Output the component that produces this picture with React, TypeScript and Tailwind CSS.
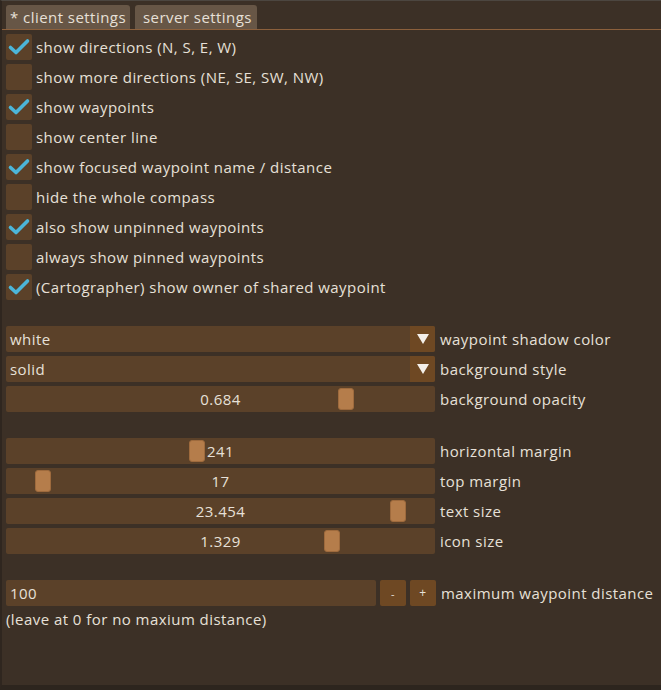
import type React from "react";

const checks: { label: string; on: boolean }[] = [
  { label: "show directions (N, S, E, W)", on: true },
  { label: "show more directions (NE, SE, SW, NW)", on: false },
  { label: "show waypoints", on: true },
  { label: "show center line", on: false },
  { label: "show focused waypoint name / distance", on: true },
  { label: "hide the whole compass", on: false },
  { label: "also show unpinned waypoints", on: true },
  { label: "always show pinned waypoints", on: false },
  { label: "(Cartographer) show owner of shared waypoint", on: true },
];

const font = "font-['Open_Sans',sans-serif] tracking-[0.45px]";

const CheckMark = () => (
  <svg width="26" height="26" viewBox="0 0 26 26">
    <path
      d="M4.5 13.5 L10 18.5 L21.5 7"
      fill="none"
      stroke="#4cb6d9"
      strokeWidth="3.6"
      strokeLinecap="round"
      strokeLinejoin="round"
    />
  </svg>
);

const Dropdown: React.FC<{ value: string; label: string }> = ({ value, label }) => (
  <div className="flex items-center gap-[5px] h-[26px]">
    <div className="flex w-[429px] h-[26px] bg-[#5b4129] rounded-[2px] overflow-hidden">
      <div className="flex-1 pl-[4px] flex items-center">{value}</div>
      <div className="w-[25px] bg-[#6e4823] flex items-center justify-center">
        <svg width="14" height="12" viewBox="0 0 14 12">
          <path d="M1 1 H13 L7 11 Z" fill="#f4efe9" />
        </svg>
      </div>
    </div>
    <span>{label}</span>
  </div>
);

const Slider: React.FC<{ value: string; label: string; knob: number }> = ({
  value,
  label,
  knob,
}) => (
  <div className="flex items-center gap-[5px] h-[26px]">
    <div className="relative w-[429px] h-[26px] bg-[#5b4129] rounded-[2px] flex items-center justify-center">
      <div
        className="absolute top-[2px] w-[16px] h-[22px] bg-[#b57d4b] border border-[#9e6a3d] rounded-[3px]"
        style={{ left: knob }}
      />
      <span className="relative">{value}</span>
    </div>
    <span>{label}</span>
  </div>
);

export default function App() {
  return (
    <div
      className={`${font} w-[661px] h-[690px] bg-[#3c3026] text-[#e7e0d8] text-[15px] leading-none border-t border-t-[#4c4640] border-l-2 border-l-[#2f261f] border-b-[5px] border-b-[#2d251e] flex flex-col overflow-hidden`}
    >
      <div className="flex gap-[5px] pl-[4px] pt-[4px]">
        <div className="h-[24px] w-[124px] bg-[#675646] rounded-t-[3px] flex items-center pl-[4px]">
          * client settings
        </div>
        <div className="h-[24px] w-[122px] bg-[#675646] rounded-t-[3px] flex items-center pl-[8px]">
          server settings
        </div>
      </div>
      <div className="h-px bg-[#8c603c] -ml-[2px]" />

      <div className="flex flex-col gap-[4px] pl-[4px] pt-[4px]">
        {checks.map((c) => (
          <div key={c.label} className="flex items-center gap-[4px] h-[26px]">
            <div className="w-[26px] h-[26px] bg-[#5b4129] rounded-[2px]">
              {c.on && <CheckMark />}
            </div>
            <span>{c.label}</span>
          </div>
        ))}
      </div>

      <div className="flex flex-col gap-[4px] pl-[4px] pt-[26px]">
        <Dropdown value="white" label="waypoint shadow color" />
        <Dropdown value="solid" label="background style" />
        <Slider value="0.684" label="background opacity" knob={332} />
      </div>

      <div className="flex flex-col gap-[4px] pl-[4px] pt-[26px]">
        <Slider value="241" label="horizontal margin" knob={183} />
        <Slider value="17" label="top margin" knob={29} />
        <Slider value="23.454" label="text size" knob={384} />
        <Slider value="1.329" label="icon size" knob={318} />
      </div>

      <div className="flex flex-col pl-[4px] pt-[26px]">
        <div className="flex items-center h-[26px]">
          <div className="w-[370px] h-[26px] bg-[#5b4129] rounded-[2px] flex items-center pl-[4px]">
            100
          </div>
          <div className="ml-[4px] w-[26px] h-[26px] bg-[#6e4823] rounded-[2px] flex items-center justify-center text-[11px]">
            -
          </div>
          <div className="ml-[4px] w-[26px] h-[26px] bg-[#6e4823] rounded-[2px] flex items-center justify-center text-[12px]">
            +
          </div>
          <span className="ml-[5px] whitespace-nowrap">maximum waypoint distance</span>
        </div>
        <div className="h-[26px] flex items-center">(leave at 0 for no maxium distance)</div>
      </div>
    </div>
  );
}
